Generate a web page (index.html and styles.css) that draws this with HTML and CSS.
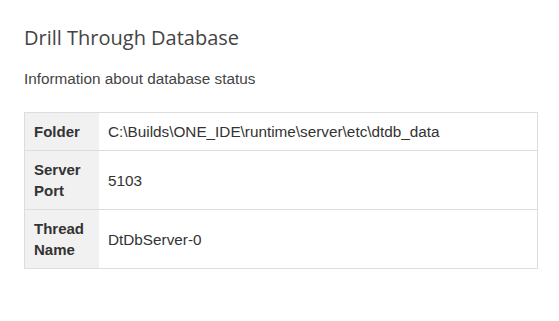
FILE: index.html
```html
<!DOCTYPE html>
<html>
<head>
  <link rel="stylesheet" href="styles.css">
</head>
<body>

  <div class="panel">
    <h2 class="panel-title">Drill Through Database</h2>
    <p class="panel-desc">Information about database status</p>

    <table class="info-table">
      <tr>
        <th>Folder</th>
        <td>C:\Builds\ONE_IDE\runtime\server\etc\dtdb_data</td>
      </tr>
      <tr>
        <th>Server Port</th>
        <td>5103</td>
      </tr>
      <tr>
        <th>Thread Name</th>
        <td>DtDbServer-0</td>
      </tr>
    </table>
  </div>

</body>
</html>
```

FILE: styles.css
```css
body {
  margin: 0;
  background: #fff;
  font-family: "Liberation Sans", Arial, sans-serif;
  font-size: 15.3px;
  color: #333;
}

.panel {
  padding: 24px 21px 0 24px;
}

.panel-title {
  margin: 0;
  font-family: "Open Sans", sans-serif;
  font-weight: normal;
  font-size: 20px;
  line-height: 28px;
  color: #444;
}

.panel-desc {
  margin: 16px 0 23px 0;
  line-height: 21px;
  color: #444;
}

table.info-table {
  width: 100%;
  border-collapse: collapse;
  border: 1px solid #ddd;
}

.info-table th, .info-table td {
  border-top: 1px solid #ddd;
  padding: 8px 9px;
  line-height: 21px;
  text-align: left;
  vertical-align: middle;
}

.info-table th {
  width: 56px;
  background-color: #f1f1f1;
  font-weight: bold;
  font-size: 15px;
  color: #333;
}

.info-table td {
  color: #333;
}
```
